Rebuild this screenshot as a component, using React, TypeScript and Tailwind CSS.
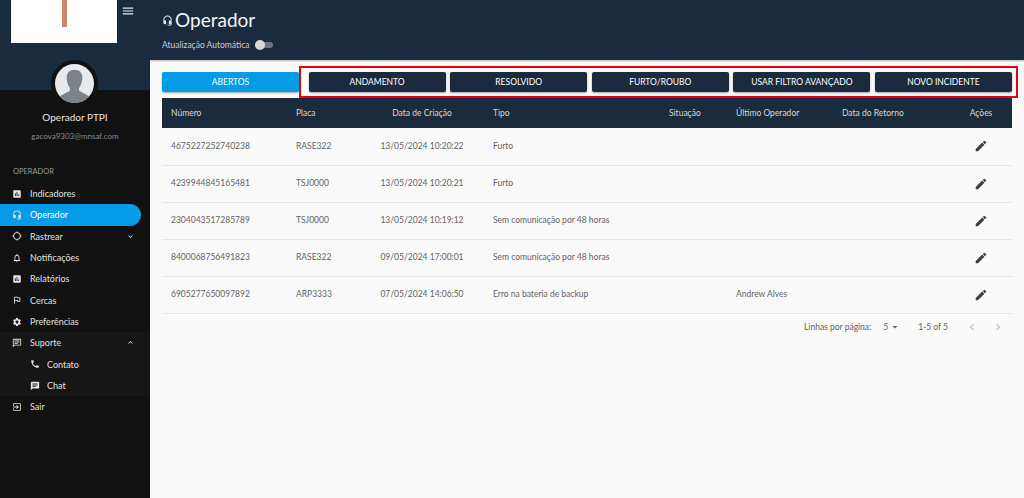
import React from "react";
import {
  MdAssessment, MdHeadsetMic, MdGpsNotFixed, MdNotificationsNone, MdOutlineFlag, MdSettings,
  MdOutlineChat, MdPhone, MdChat, MdExitToApp, MdEdit, MdMenu, MdExpandMore, MdExpandLess,
  MdArrowDropDown, MdChevronLeft, MdChevronRight,
} from "react-icons/md";

const font = { fontFamily: '"Lato", "Noto Sans", sans-serif' };

type NavItem = { label: string; icon: React.ElementType; active?: boolean; sub?: boolean; chevron?: "down" | "up"; group?: boolean };
const nav: NavItem[] = [
  { label: "Indicadores", icon: MdAssessment },
  { label: "Operador", icon: MdHeadsetMic, active: true },
  { label: "Rastrear", icon: MdGpsNotFixed, chevron: "down" },
  { label: "Notificações", icon: MdNotificationsNone },
  { label: "Relatórios", icon: MdAssessment },
  { label: "Cercas", icon: MdOutlineFlag },
  { label: "Preferências", icon: MdSettings },
  { label: "Suporte", icon: MdOutlineChat, chevron: "up", group: true },
  { label: "Contato", icon: MdPhone, sub: true, group: true },
  { label: "Chat", icon: MdChat, sub: true, group: true },
  { label: "Sair", icon: MdExitToApp },
];

const rows = [
  ["4675227252740238", "RASE322", "13/05/2024 10:20:22", "Furto", ""],
  ["4239944845165481", "TSJ0000", "13/05/2024 10:20:21", "Furto", ""],
  ["2304043517285789", "TSJ0000", "13/05/2024 10:19:12", "Sem comunicação por 48 horas", ""],
  ["8400068756491823", "RASE322", "09/05/2024 17:00:01", "Sem comunicação por 48 horas", ""],
  ["6905277650097892", "ARP3333", "07/05/2024 14:06:50", "Erro na bateria de backup", "Andrew Alves"],
];

function Sidebar() {
  return (
    <aside className="w-[150px] shrink-0 bg-[#111111] flex flex-col h-[498px]">
      <div className="h-[90px] bg-[#1a2b3d] relative flex items-start pl-[11px] shrink-0">
        <div className="w-[106px] h-[43px] bg-white flex justify-center">
          <div className="w-[5px] h-[27px] bg-[#c98a6a]" />
        </div>
        <MdMenu className="ml-[4px] mt-[4px] text-[#e5e7eb]" size={14} />
        <div className="absolute left-[51px] top-[60px] w-[47px] h-[47px] rounded-full bg-[#111111] flex items-center justify-center">
          <svg viewBox="0 0 40 40" className="w-[39px] h-[39px]">
            <defs><clipPath id="c"><circle cx="20" cy="20" r="20" /></clipPath></defs>
            <circle cx="20" cy="20" r="20" fill="#e8e9ed" />
            <g clipPath="url(#c)" fill="#7c8289">
              <path d="M20 6c-5 0-8 3-8 8 0 4 1 7 3 10 .6 1 .6 3-.5 4-2 1.500-7 3-9 5-1 1-1.500 3-1.500 7h32c0-4-.5-6-1.500-7-2-2-7-3.500-9-5-1.100-1-1.100-3-.5-4 2-3 3-6 3-10 0-5-3-8-8-8z" />
            </g>
          </svg>
        </div>
      </div>
      <div className="pt-[21px] text-center">
        <div className="text-[10px] leading-[12px] text-[#e5e5e5]">Operador PTPI</div>
        <div className="mt-[8px] text-[8px] leading-[10px] text-[#8a8a8a]">gacova9303@mnsaf.com</div>
      </div>
      <div className="pl-[13px] mt-[26px] text-[7.5px] leading-[10px] text-[#9a9a9a]">OPERADOR</div>
      <nav className="mt-[6px] flex flex-col">
        {nav.map((n) => {
          const Icon = n.icon;
          return (
            <div
              key={n.label}
              className={`h-[21.33px] flex items-center text-[9px] text-[#e0e0e0] ${n.active ? "w-[141px] bg-[#039be5] rounded-r-full text-white" : "w-full"} ${n.group ? "bg-[#161616]" : ""} ${n.sub ? "pl-[30px]" : "pl-[12px]"}`}
            >
              <Icon size={10} className="shrink-0 text-[#e5e5e5]" />
              <span className={n.sub ? "ml-[7px]" : "ml-[8px]"}>{n.label}</span>
              {n.chevron === "down" && <MdExpandMore size={9} className="ml-auto mr-[15px]" />}
              {n.chevron === "up" && <MdExpandLess size={9} className="ml-auto mr-[15px]" />}
            </div>
          );
        })}
      </nav>
    </aside>
  );
}

function Button({ label, active }: { label: string; active?: boolean }) {
  return (
    <button
      className={`h-[20px] rounded-[2px] text-[8.5px] text-center shadow-[0_1px_2px_rgba(0,0,0,0.35)] text-white ${active ? "w-[137px] bg-[#039be5] mr-[5px]" : "flex-1 bg-[#1a2b3d] text-[#e5e7eb]"}`}
    >
      {label}
    </button>
  );
}

export default function App() {
  return (
    <div className="flex w-[1024px] h-[498px] overflow-hidden bg-[#fafafa]" style={font}>
      <Sidebar />
      <main className="flex-1 flex flex-col min-w-0">
        <header className="h-[60px] shrink-0 bg-[#1a2b3d] pl-[12px] pt-[7px] shadow-[0_1px_2px_rgba(0,0,0,0.3)]">
          <div className="flex items-center h-[26px] text-white">
            <MdHeadsetMic size={11} className="text-[#e5e7eb]" />
            <span className="ml-[2px] text-[19px] leading-[26px] text-[#f3f4f6]">Operador</span>
          </div>
          <div className="mt-[6px] flex items-center text-[8.5px] text-[#c9ced4]">
            <span>Atualização Automática</span>
            <div className="ml-[5px] relative w-[18px] h-[6px] rounded-full bg-[#6b7480]">
              <div className="absolute left-0 top-[-2px] w-[10px] h-[10px] rounded-full bg-[#d8d8d8]" />
            </div>
          </div>
        </header>

        <div className="pl-[12px] pr-[12px] pt-[12px] relative">
          <div className="flex gap-[4.500px]">
            <Button label="ABERTOS" active />
            <Button label="ANDAMENTO" />
            <Button label="RESOLVIDO" />
            <Button label="FURTO/ROUBO" />
            <Button label="USAR FILTRO AVANÇADO" />
            <Button label="NOVO INCIDENTE" />
          </div>
          <div className="absolute left-[149px] top-[6px] w-[719px] h-[32px] border-2 border-[#e8000f] pointer-events-none" />

          <table className="mt-[6px] w-[850px] table-fixed border-collapse">
            <colgroup>
              <col className="w-[125px]" /><col className="w-[75px]" /><col className="w-[120px]" /><col className="w-[178px]" />
              <col className="w-[67px]" /><col className="w-[106px]" /><col className="w-[117px]" /><col className="w-[62px]" />
            </colgroup>
            <thead>
              <tr className="h-[30px] bg-[#1a2b3d] text-[8.5px] text-[#d5d9de] font-normal">
                <th className="pl-[9px] text-left font-normal">Número</th>
                <th className="pl-[9px] text-left font-normal">Placa</th>
                <th className="text-center font-normal">Data de Criação</th>
                <th className="pl-[11px] text-left font-normal">Tipo</th>
                <th className="pl-[9px] text-left font-normal">Situação</th>
                <th className="pl-[9px] text-left font-normal">Último Operador</th>
                <th className="pl-[9px] text-left font-normal">Data do Retorno</th>
                <th className="text-center font-normal">Ações</th>
              </tr>
            </thead>
            <tbody>
              {rows.map((r) => (
                <tr key={r[0]} className="h-[37px] border-b border-[#e8e8e8] text-[8.5px] text-[#5f6368]">
                  <td className="pl-[9px]">{r[0]}</td>
                  <td className="pl-[9px]">{r[1]}</td>
                  <td className="text-center">{r[2]}</td>
                  <td className="pl-[11px]">{r[3]}</td>
                  <td />
                  <td className="pl-[9px]">{r[4]}</td>
                  <td />
                  <td><MdEdit size={14} className="mx-auto text-[#3c3c3c]" /></td>
                </tr>
              ))}
            </tbody>
          </table>

          <div className="w-[850px] h-[27px] flex items-center justify-end text-[8.5px] text-[#5f6368]">
            <span>Linhas por página:</span>
            <span className="ml-[12px]">5</span>
            <MdArrowDropDown size={12} className="ml-[1px]" />
            <span className="ml-[17px]">1-5 of 5</span>
            <MdChevronLeft size={14} className="ml-[17px] text-[#c4c4c4]" />
            <MdChevronRight size={14} className="ml-[12px] mr-[7px] text-[#c4c4c4]" />
          </div>
        </div>
      </main>
    </div>
  );
}
